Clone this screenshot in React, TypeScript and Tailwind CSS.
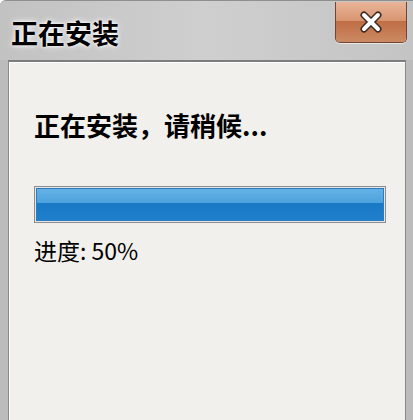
import React from "react";

const cjk = { fontFamily: '"Noto Sans CJK SC", "Noto Sans", sans-serif' };

function CloseButton() {
  return (
    <div className="relative mt-[1px] w-[72px] h-[41px] rounded-b-[5px] border border-t-0 border-[#6e4634] overflow-hidden shadow-[0_1px_0_rgba(255,255,255,0.6)]">
      <div className="flex flex-col h-full">
        <div className="h-[48%] bg-gradient-to-b from-[#e9b59a] to-[#d8946f]" />
        <div className="flex-1 bg-gradient-to-b from-[#bf6d44] to-[#cc8a62]" />
      </div>
      <div className="absolute inset-0 flex items-center justify-center">
        <svg width="28" height="24" viewBox="0 0 28 24">
          <path d="M7 5 L21 19 M21 5 L7 19" stroke="#3b2a22" strokeWidth="7" strokeLinecap="round" />
          <path d="M7 5 L21 19 M21 5 L7 19" stroke="#ffffff" strokeWidth="4" strokeLinecap="round" />
        </svg>
      </div>
    </div>
  );
}

export default function App() {
  return (
    <div
      className="w-[413px] h-[420px] overflow-hidden bg-[#bcbcbc] flex flex-col rounded-tl-[6px] border-t border-[#8f8f8f]"
      style={cjk}
    >
      {/* title bar */}
      <div className="h-[59px] flex items-start justify-between bg-gradient-to-r from-[#c2c2c2] via-[#cfcfcf] to-[#c4c4c4] pl-[11px] pr-[6px]">
        <div className="mt-[13px] text-[27px] leading-[38px] font-bold text-black [text-shadow:0_0_6px_#ffffff,0_0_3px_#ffffff]">
          正在安装
        </div>
        <CloseButton />
      </div>

      {/* client area */}
      <div className="flex-1 mx-[8px] mr-[7px] border-t-2 border-l border-r border-t-[#7d7d7d] border-l-[#8a8a8a] border-r-[#8a8a8a] bg-[#f1f0ec]">
        <div className="h-full border-t border-l border-white flex flex-col pl-[24px] pr-[20px]">
          <div className="mt-[43px] text-[26px] leading-[38px] font-semibold text-black">
            正在安装，请稍候...
          </div>
          <div className="mt-[42px] h-[37px] w-[352px] border border-[#8d8d8d] bg-[#e6e6e6] p-[1px]">
            <div className="h-full w-full flex flex-col border border-[#2d7cc1]">
              <div className="h-[45%] bg-gradient-to-b from-[#64b1e6] to-[#4ea2dd]" />
              <div className="flex-1 bg-gradient-to-b from-[#1a79c6] to-[#1f7fcb]" />
            </div>
          </div>
          <div className="mt-[11px] text-[23px] leading-[32px] text-black">进度: 50%</div>
        </div>
      </div>
    </div>
  );
}
